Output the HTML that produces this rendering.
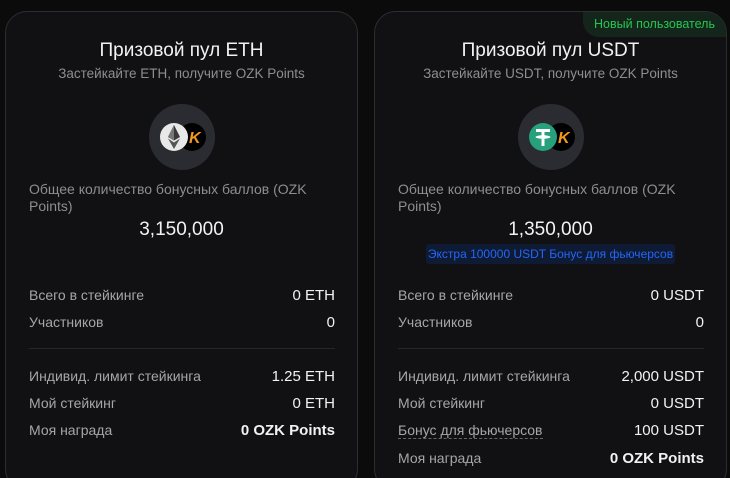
<!DOCTYPE html><html><head><meta charset="utf-8"><style>
*{margin:0;padding:0;box-sizing:border-box}
html,body{width:730px;height:478px;overflow:hidden}
body{background:#0b0b0c;font-family:"Liberation Sans",sans-serif;position:relative}
.card{position:absolute;top:11px;width:353px;height:480px;border:1.5px solid #2c2d31;border-radius:22px;background:#111113;overflow:hidden}
.t{position:absolute;top:28px;left:0;right:0;text-align:center;color:#f2f2f2;font-size:19px}
.s{position:absolute;top:54px;left:0;right:0;text-align:center;color:#8d8e92;font-size:13.5px}
.ic{position:absolute;top:92px;left:143px;width:66px;height:66px;border-radius:50%;background:#2b2c31}
.lab{position:absolute;top:169px;left:23px;width:290px;color:#8d8e92;font-size:14px;line-height:17px}
.num{position:absolute;top:207px;left:0;right:0;text-align:center;color:#f2f2f2;font-size:19px}
.row{position:absolute;left:23px;right:22px;display:flex;justify-content:space-between;font-size:14px;color:#a5a6aa}
.row b{font-weight:normal;color:#f2f2f2;font-size:15px}
.hr{position:absolute;left:23px;right:22px;top:336px;border-top:1px solid #26272b}
</style></head><body>
<div class="card" style="left:5px">
<div class="t">Призовой пул ETH</div>
<div class="s">Застейкайте ETH, получите OZK Points</div>
<div class="ic"><svg width="66" height="66"><circle cx="43" cy="33" r="14" fill="#000"/><text x="40" y="39" font-family="Liberation Sans" font-weight="bold" font-style="italic" font-size="16" fill="#f59a1b">K</text><circle cx="25" cy="33" r="14" fill="#e8e8e8"/><path d="M25 21 L31 33 L25 36.5 L19 33Z" fill="#3a3a3a"/><path d="M25 21 L25 36.5 L19 33Z" fill="#777"/><path d="M25 38.5 L31 34.5 L25 45 L19 34.5Z" fill="#555"/></svg></div>
<div class="lab">Общее количество бонусных баллов (OZK Points)</div>
<div class="num">3,150,000</div>
<div class="row" style="top:275px"><span>Всего в стейкинге</span><b>0 ETH</b></div>
<div class="row" style="top:302px"><span>Участников</span><b>0</b></div>
<div class="hr"></div>
<div class="row" style="top:356px"><span>Индивид. лимит стейкинга</span><b>1.25 ETH</b></div>
<div class="row" style="top:383px"><span>Мой стейкинг</span><b>0 ETH</b></div>
<div class="row" style="top:410px"><span>Моя награда</span><b style="font-weight:bold">0 OZK Points</b></div>
</div>
<div class="card" style="left:374px">
<div style="position:absolute;right:0;top:0;width:143px;height:25px;background:#14261b;border-bottom-left-radius:16px;color:#28c451;font-size:12.5px;text-align:center;line-height:24px">Новый пользователь</div>
<div class="t">Призовой пул USDT</div>
<div class="s">Застейкайте USDT, получите OZK Points</div>
<div class="ic"><svg width="66" height="66"><circle cx="43" cy="33" r="14" fill="#000"/><text x="40" y="39" font-family="Liberation Sans" font-weight="bold" font-style="italic" font-size="16" fill="#f59a1b">K</text><circle cx="25" cy="33" r="14" fill="#26a17b"/><path d="M18 25h14v3h-5.5v3.2c3.5.3 6 1 6 1.8s-2.5 1.5-6 1.8V42h-3v-7.2c-3.5-.3-6-1-6-1.8s2.5-1.5 6-1.8V28H18z" fill="#fff"/></svg></div>
<div class="lab">Общее количество бонусных баллов (OZK Points)</div>
<div class="num">1,350,000</div>
<div style="position:absolute;top:232px;left:51px;width:249px;height:20px;background:#0f1b35;border-radius:3px;color:#2466f5;font-size:12px;text-align:center;line-height:20px">Экстра 100000 USDT Бонус для фьючерсов</div>
<div class="row" style="top:275px"><span>Всего в стейкинге</span><b>0 USDT</b></div>
<div class="row" style="top:302px"><span>Участников</span><b>0</b></div>
<div class="hr"></div>
<div class="row" style="top:356px"><span>Индивид. лимит стейкинга</span><b>2,000 USDT</b></div>
<div class="row" style="top:383px"><span>Мой стейкинг</span><b>0 USDT</b></div>
<div class="row" style="top:410px"><span style="border-bottom:1px dashed #666">Бонус для фьючерсов</span><b>100 USDT</b></div>
<div class="row" style="top:438px"><span>Моя награда</span><b style="font-weight:bold">0 OZK Points</b></div>
</div>
</body></html>
